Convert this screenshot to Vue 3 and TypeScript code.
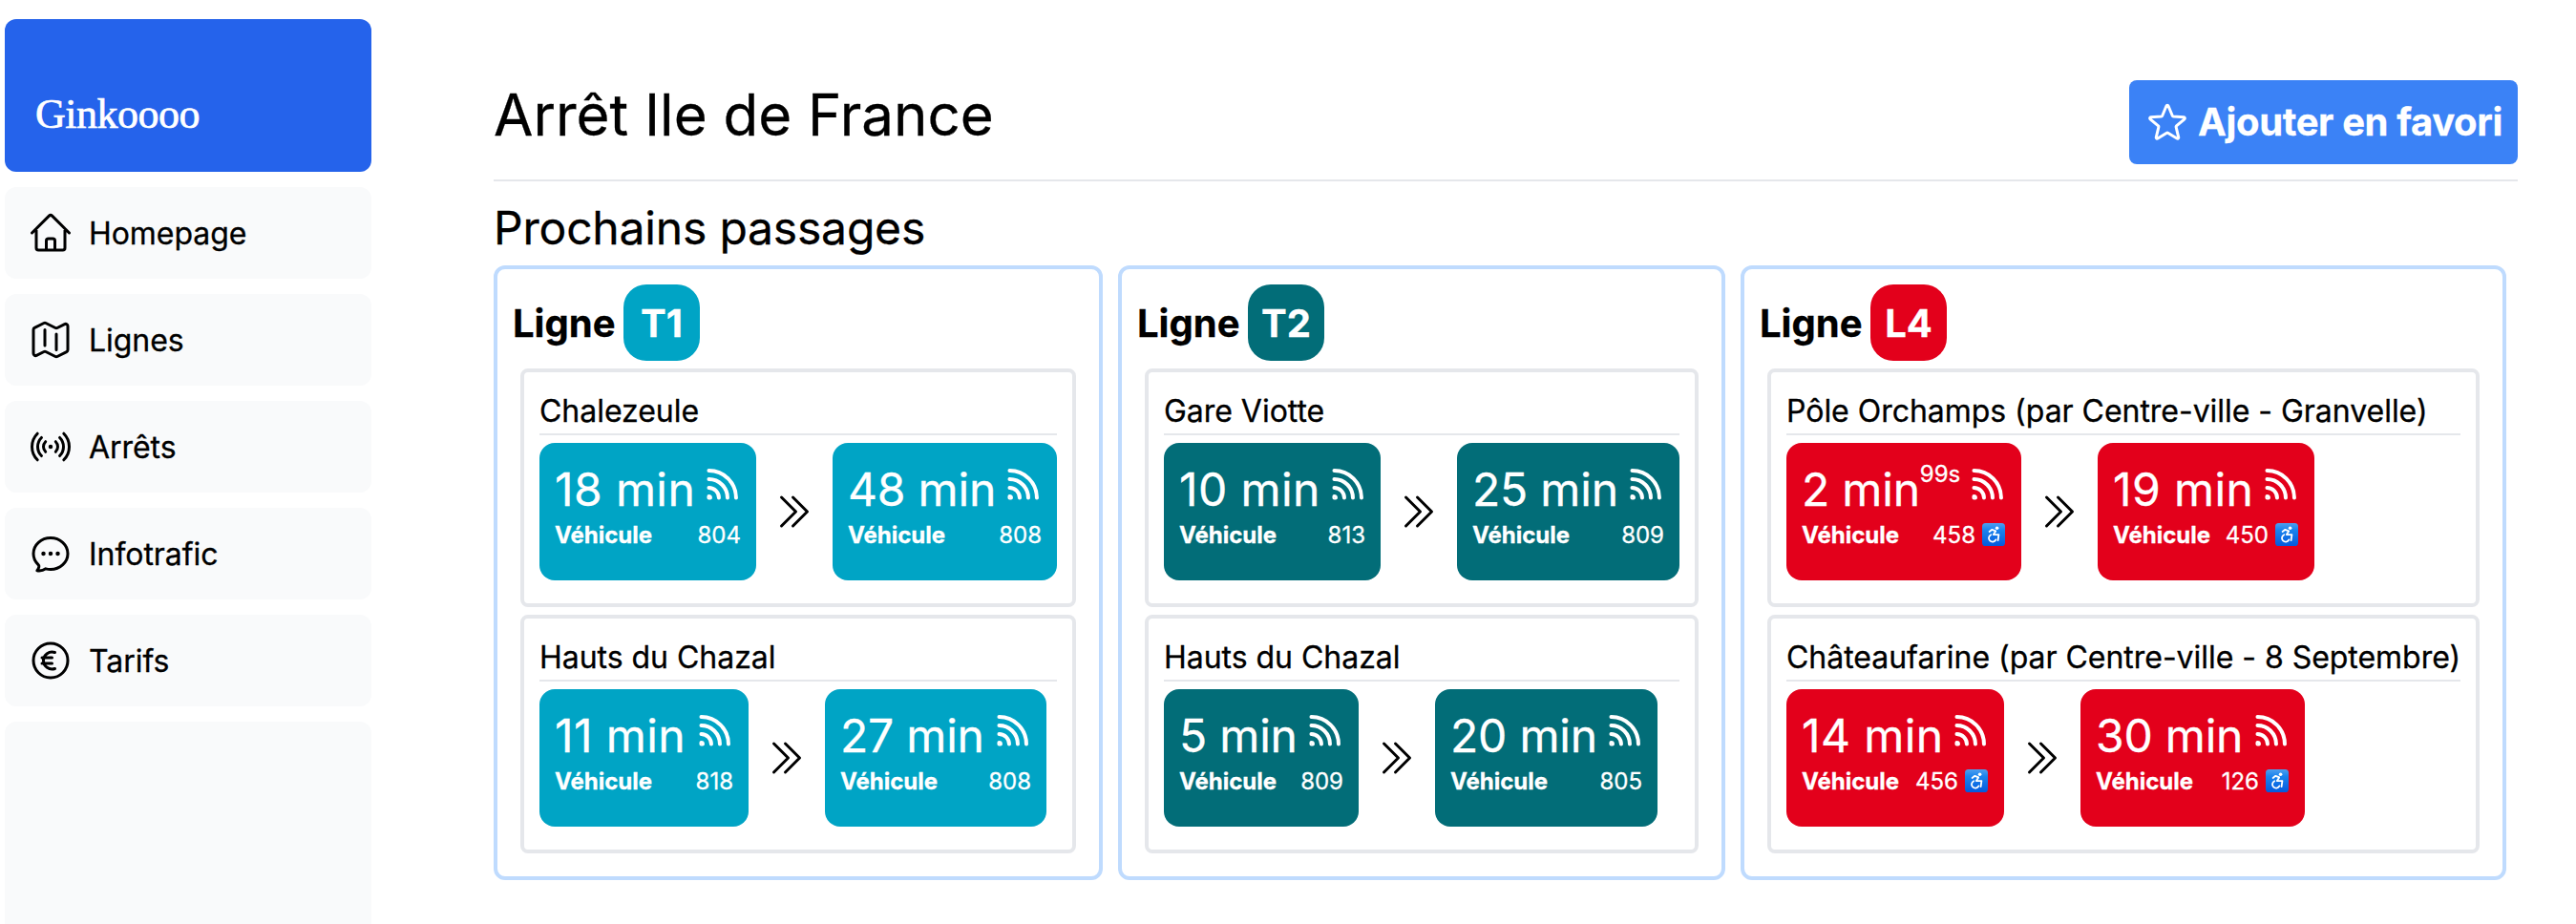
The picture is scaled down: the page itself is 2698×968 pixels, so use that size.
<script setup lang="ts">
interface Passage { time: string; sup?: string; vehicle: string; accessible?: boolean; width: number }
interface Direction { name: string; passages: Passage[] }
interface Line { code: string; tone: string; directions: Direction[] }
interface NavItem { label: string; path: string }

const nav: NavItem[] = [
  {
    label: 'Homepage',
    path: 'M2.25 12l8.954-8.955c.44-.439 1.152-.439 1.591 0L21.75 12M4.5 9.75v10.125c0 .621.504 1.125 1.125 1.125H9.75v-4.875c0-.621.504-1.125 1.125-1.125h2.25c.621 0 1.125.504 1.125 1.125V21h4.125c.621 0 1.125-.504 1.125-1.125V9.75M8.25 21h8.25',
  },
  {
    label: 'Lignes',
    path: 'M9 6.75V15m6-6v8.25m.503 3.498l4.875-2.437c.381-.19.622-.58.622-1.006V4.82c0-.836-.88-1.38-1.628-1.006l-3.869 1.934c-.317.159-.69.159-1.006 0L9.503 3.252a1.125 1.125 0 00-1.006 0L3.622 5.689C3.24 5.88 3 6.27 3 6.695V19.18c0 .836.88 1.38 1.628 1.006l3.869-1.934c.317-.159.69-.159 1.006 0l4.994 2.497c.317.158.69.158 1.006 0z',
  },
  {
    label: 'Arrêts',
    path: 'M9.348 14.651a3.75 3.75 0 010-5.303m5.304 0a3.75 3.75 0 010 5.303m-7.425 2.122a6.75 6.75 0 010-9.546m9.546 0a6.75 6.75 0 010 9.546M5.106 18.894c-3.808-3.808-3.808-9.98 0-13.789m13.788 0c3.808 3.808 3.808 9.981 0 13.79M12 12h.008v.007H12V12zm.375 0a.375.375 0 11-.75 0 .375.375 0 01.75 0z',
  },
  {
    label: 'Infotrafic',
    path: 'M8.625 12a.375.375 0 11-.75 0 .375.375 0 01.75 0zm0 0H8.25m4.125 0a.375.375 0 11-.75 0 .375.375 0 01.75 0zm0 0H12m4.125 0a.375.375 0 11-.75 0 .375.375 0 01.75 0zm0 0h-.375M21 12c0 4.556-4.03 8.25-9 8.25a9.764 9.764 0 01-2.555-.337A5.972 5.972 0 015.41 20.97a5.969 5.969 0 01-.474-.065 4.48 4.48 0 00.978-2.025c.09-.457-.133-.901-.467-1.226C3.93 16.178 3 14.189 3 12c0-4.556 4.03-8.25 9-8.25s9 3.694 9 8.25z',
  },
  {
    label: 'Tarifs',
    path: 'M14.25 7.756a4.5 4.5 0 100 8.488M7.5 10.5h5.25m-5.25 3h5.25M21 12a9 9 0 11-18 0 9 9 0 0118 0z',
  },
]

const lines: Line[] = [
  {
    code: 'T1', tone: 't1',
    directions: [
      { name: 'Chalezeule', passages: [{ time: '18 min', vehicle: '804', width: 227 }, { time: '48 min', vehicle: '808', width: 235 }] },
      { name: 'Hauts du Chazal', passages: [{ time: '11 min', vehicle: '818', width: 219 }, { time: '27 min', vehicle: '808', width: 232 }] },
    ],
  },
  {
    code: 'T2', tone: 't2',
    directions: [
      { name: 'Gare Viotte', passages: [{ time: '10 min', vehicle: '813', width: 227 }, { time: '25 min', vehicle: '809', width: 233 }] },
      { name: 'Hauts du Chazal', passages: [{ time: '5 min', vehicle: '809', width: 204 }, { time: '20 min', vehicle: '805', width: 233 }] },
    ],
  },
  {
    code: 'L4', tone: 'l4',
    directions: [
      {
        name: 'Pôle Orchamps (par Centre-ville - Granvelle)',
        passages: [
          { time: '2 min', sup: '99s', vehicle: '458', accessible: true, width: 246 },
          { time: '19 min', vehicle: '450', accessible: true, width: 227 },
        ],
      },
      {
        name: 'Châteaufarine (par Centre-ville - 8 Septembre)',
        passages: [
          { time: '14 min', vehicle: '456', accessible: true, width: 228 },
          { time: '30 min', vehicle: '126', accessible: true, width: 235 },
        ],
      },
    ],
  },
]
</script>

<template>
  <div class="page">
    <aside class="sidebar">
      <div class="logo">Ginkoooo</div>
      <a v-for="item in nav" :key="item.label" class="nav-item">
        <svg class="icon" viewBox="0 0 24 24"><path :d="item.path" /></svg>
        <span>{{ item.label }}</span>
      </a>
      <div class="filler"></div>
    </aside>

    <main class="main">
      <header class="header">
        <h1>Arrêt Ile de France</h1>
        <button class="fav" type="button">
          <svg class="icon" viewBox="0 0 24 24">
            <path d="M11.48 3.499a.562.562 0 011.04 0l2.125 5.111a.563.563 0 00.475.345l5.518.442c.499.04.701.663.321.988l-4.204 3.602a.563.563 0 00-.182.557l1.285 5.385a.562.562 0 01-.84.61l-4.725-2.885a.563.563 0 00-.586 0L6.982 20.54a.562.562 0 01-.84-.61l1.285-5.386a.562.562 0 00-.182-.557l-4.204-3.602a.563.563 0 01.321-.988l5.518-.442a.563.563 0 00.475-.345L11.48 3.5z" />
          </svg>
          <span>Ajouter en favori</span>
        </button>
      </header>

      <h2>Prochains passages</h2>

      <div class="lines">
        <section v-for="line in lines" :key="line.code" class="line" :class="line.tone">
          <div class="line-head"><span class="label">Ligne</span><span class="badge">{{ line.code }}</span></div>
          <div v-for="dir in line.directions" :key="dir.name" class="direction">
            <h3>{{ dir.name }}</h3>
            <div class="passages">
              <template v-for="(p, i) in dir.passages" :key="p.time">
                <svg v-if="i > 0" class="icon next" viewBox="0 0 24 24">
                  <path d="M11.25 4.5l7.5 7.5-7.5 7.5m-6-15l7.5 7.5-7.5 7.5" />
                </svg>
                <div class="tile" :style="{ width: p.width + 'px' }">
                  <div class="time">
                    <span class="minutes" :class="{ narrow: p.time.startsWith('1') }">{{ p.time }}</span>
                    <span v-if="p.sup" class="sup">{{ p.sup }}</span>
                    <svg class="icon live" viewBox="0 0 24 24">
                      <path d="M8.288 15.038a5.25 5.25 0 017.424 0M5.106 11.856c3.807-3.808 9.98-3.808 13.788 0M1.924 8.674c5.565-5.565 14.587-5.565 20.152 0M12.53 18.22l-.53.53-.53-.53a.75.75 0 011.06 0z" />
                    </svg>
                  </div>
                  <div class="vehicle">
                    <b>Véhicule</b>
                    <div class="number">
                      <span>{{ p.vehicle }}</span>
                      <svg v-if="p.accessible" class="wheelchair" viewBox="0 0 24 24">
                        <defs>
                          <linearGradient id="plate" x1="0" y1="0" x2="0" y2="1">
                            <stop offset="0" stop-color="#4f9fee" />
                            <stop offset=".3" stop-color="#1a84ee" />
                            <stop offset="1" stop-color="#0459dc" />
                          </linearGradient>
                        </defs>
                        <rect width="24" height="24" rx="3.6" fill="url(#plate)" />
                        <circle cx="15.6" cy="5.3" r="1.8" fill="#fff" />
                        <path class="chair" d="M7.6 9l2.8-2.2 3.8 1.6-2.4 3.7h5.6l-.8 6" />
                        <path class="chair" d="M9.2 12.2a3.9 3.9 0 105.2 5.2" />
                      </svg>
                    </div>
                  </div>
                </div>
              </template>
            </div>
          </div>
        </section>
      </div>
    </main>
  </div>
</template>

<style>
body { margin: 0; background: #fff; overflow: hidden; }
</style>

<style scoped>
.page {
  display: flex;
  width: 2698px;
  height: 968px;
  overflow: hidden;
  box-sizing: border-box;
  font-family: Inter, "Liberation Sans", sans-serif;
  font-size: 32px;
  line-height: 48px;
  color: #000;
  -webkit-text-stroke: 0.3px currentColor;
}
.page * { box-sizing: border-box; }
.icon {
  width: 48px;
  height: 48px;
  flex: none;
  fill: none;
  stroke: currentColor;
  stroke-width: 1.5;
  stroke-linecap: round;
  stroke-linejoin: round;
}
.sidebar {
  width: 384px;
  height: 968px;
  margin-left: 5px;
  padding-top: 20px;
  flex: none;
  display: flex;
  flex-direction: column;
  gap: 16px;
}
.logo {
  height: 160px;
  flex: none;
  padding: 0 32px 32px;
  display: flex;
  align-items: flex-end;
  border-radius: 12px;
  background: #2563eb;
  color: #fff;
  font-family: "Liberation Serif", serif;
  font-size: 44px;
  line-height: 56px;
  letter-spacing: -0.5px;
  -webkit-text-stroke-width: 0.7px;
}
.nav-item {
  height: 96px;
  flex: none;
  padding: 0 24px;
  display: flex;
  align-items: center;
  gap: 16px;
  border-radius: 12px;
  background: #f9fafb;
  letter-spacing: -0.05px;
}
.nav-item span { padding-top: 2px; }
.filler { flex: 1; border-radius: 12px 12px 0 0; background: #f9fafb; }
.main { margin-left: 128px; padding-top: 84px; width: 2120px; flex: none; }
.header {
  height: 106px;
  display: flex;
  justify-content: space-between;
  align-items: flex-start;
  border-bottom: 2px solid #e5e7eb;
}
h1, h2, h3 { margin: 0; font-weight: 400; }
h1 { font-size: 60px; line-height: 72px; }
.fav {
  height: 88px;
  padding: 0 16px;
  display: flex;
  align-items: center;
  gap: 8px;
  border: 0;
  border-radius: 8px;
  background: #3b82f6;
  color: #fff;
  font: 700 40px/56px Inter, "Liberation Sans", sans-serif;
  letter-spacing: -0.36px;
}
h2 {
  margin: 16px 0 8px;
  padding-top: 2px;
  font-size: 48px;
  line-height: 62px;
  letter-spacing: -0.19px;
}
.lines { display: flex; gap: 16px; align-items: flex-start; }
.line { padding: 16px; border: 4px solid #bfdbfe; border-radius: 12px; }
.line-head {
  display: flex;
  align-items: center;
  font-size: 40px;
  font-weight: 700;
}
.label { width: 116px; padding-top: 2px; }
.badge {
  width: 80px;
  height: 80px;
  padding-top: 2px;
  display: flex;
  align-items: center;
  justify-content: center;
  border-radius: 24px;
  color: #fff;
}
.direction {
  margin: 8px;
  padding: 16px;
  border: 4px solid #e5e7eb;
  border-radius: 8px;
}
h3 {
  padding-top: 2px;
  font-size: 32px;
  line-height: 46px;
  letter-spacing: -0.03px;
  border-bottom: 2px solid #e5e7eb;
  white-space: nowrap;
}
.passages { display: flex; align-items: center; padding: 8px 0; }
.next { margin: 0 16px; }
.tile { height: 144px; padding: 16px; flex: none; border-radius: 16px; color: #fff; }
.t1 .badge, .t1 .tile { background: #00a4c5; }
.t2 .badge, .t2 .tile { background: #026d78; }
.l4 .badge, .l4 .tile { background: #e3001b; }
.time {
  display: flex;
  align-items: center;
  height: 64px;
  font-size: 48px;
  line-height: 62px;
  white-space: nowrap;
}
.minutes { padding-top: 2px; letter-spacing: -0.2px; }
.minutes.narrow { letter-spacing: 0.4px; }
.sup { align-self: flex-start; padding-top: 1px; font-size: 24px; line-height: 32px; }
.live { margin-left: auto; stroke-width: 2; transform: rotate(45deg); }
.vehicle {
  display: flex;
  justify-content: space-between;
  padding-top: 2px;
  font-size: 24px;
  line-height: 30px;
}
.number { display: flex; align-items: center; gap: 7px; }
.wheelchair { width: 24px; height: 24px; margin: 0 1px 2px 0; flex: none; }
.chair {
  fill: none;
  stroke: #fff;
  stroke-width: 1.8;
  stroke-linecap: round;
  stroke-linejoin: round;
}
</style>
